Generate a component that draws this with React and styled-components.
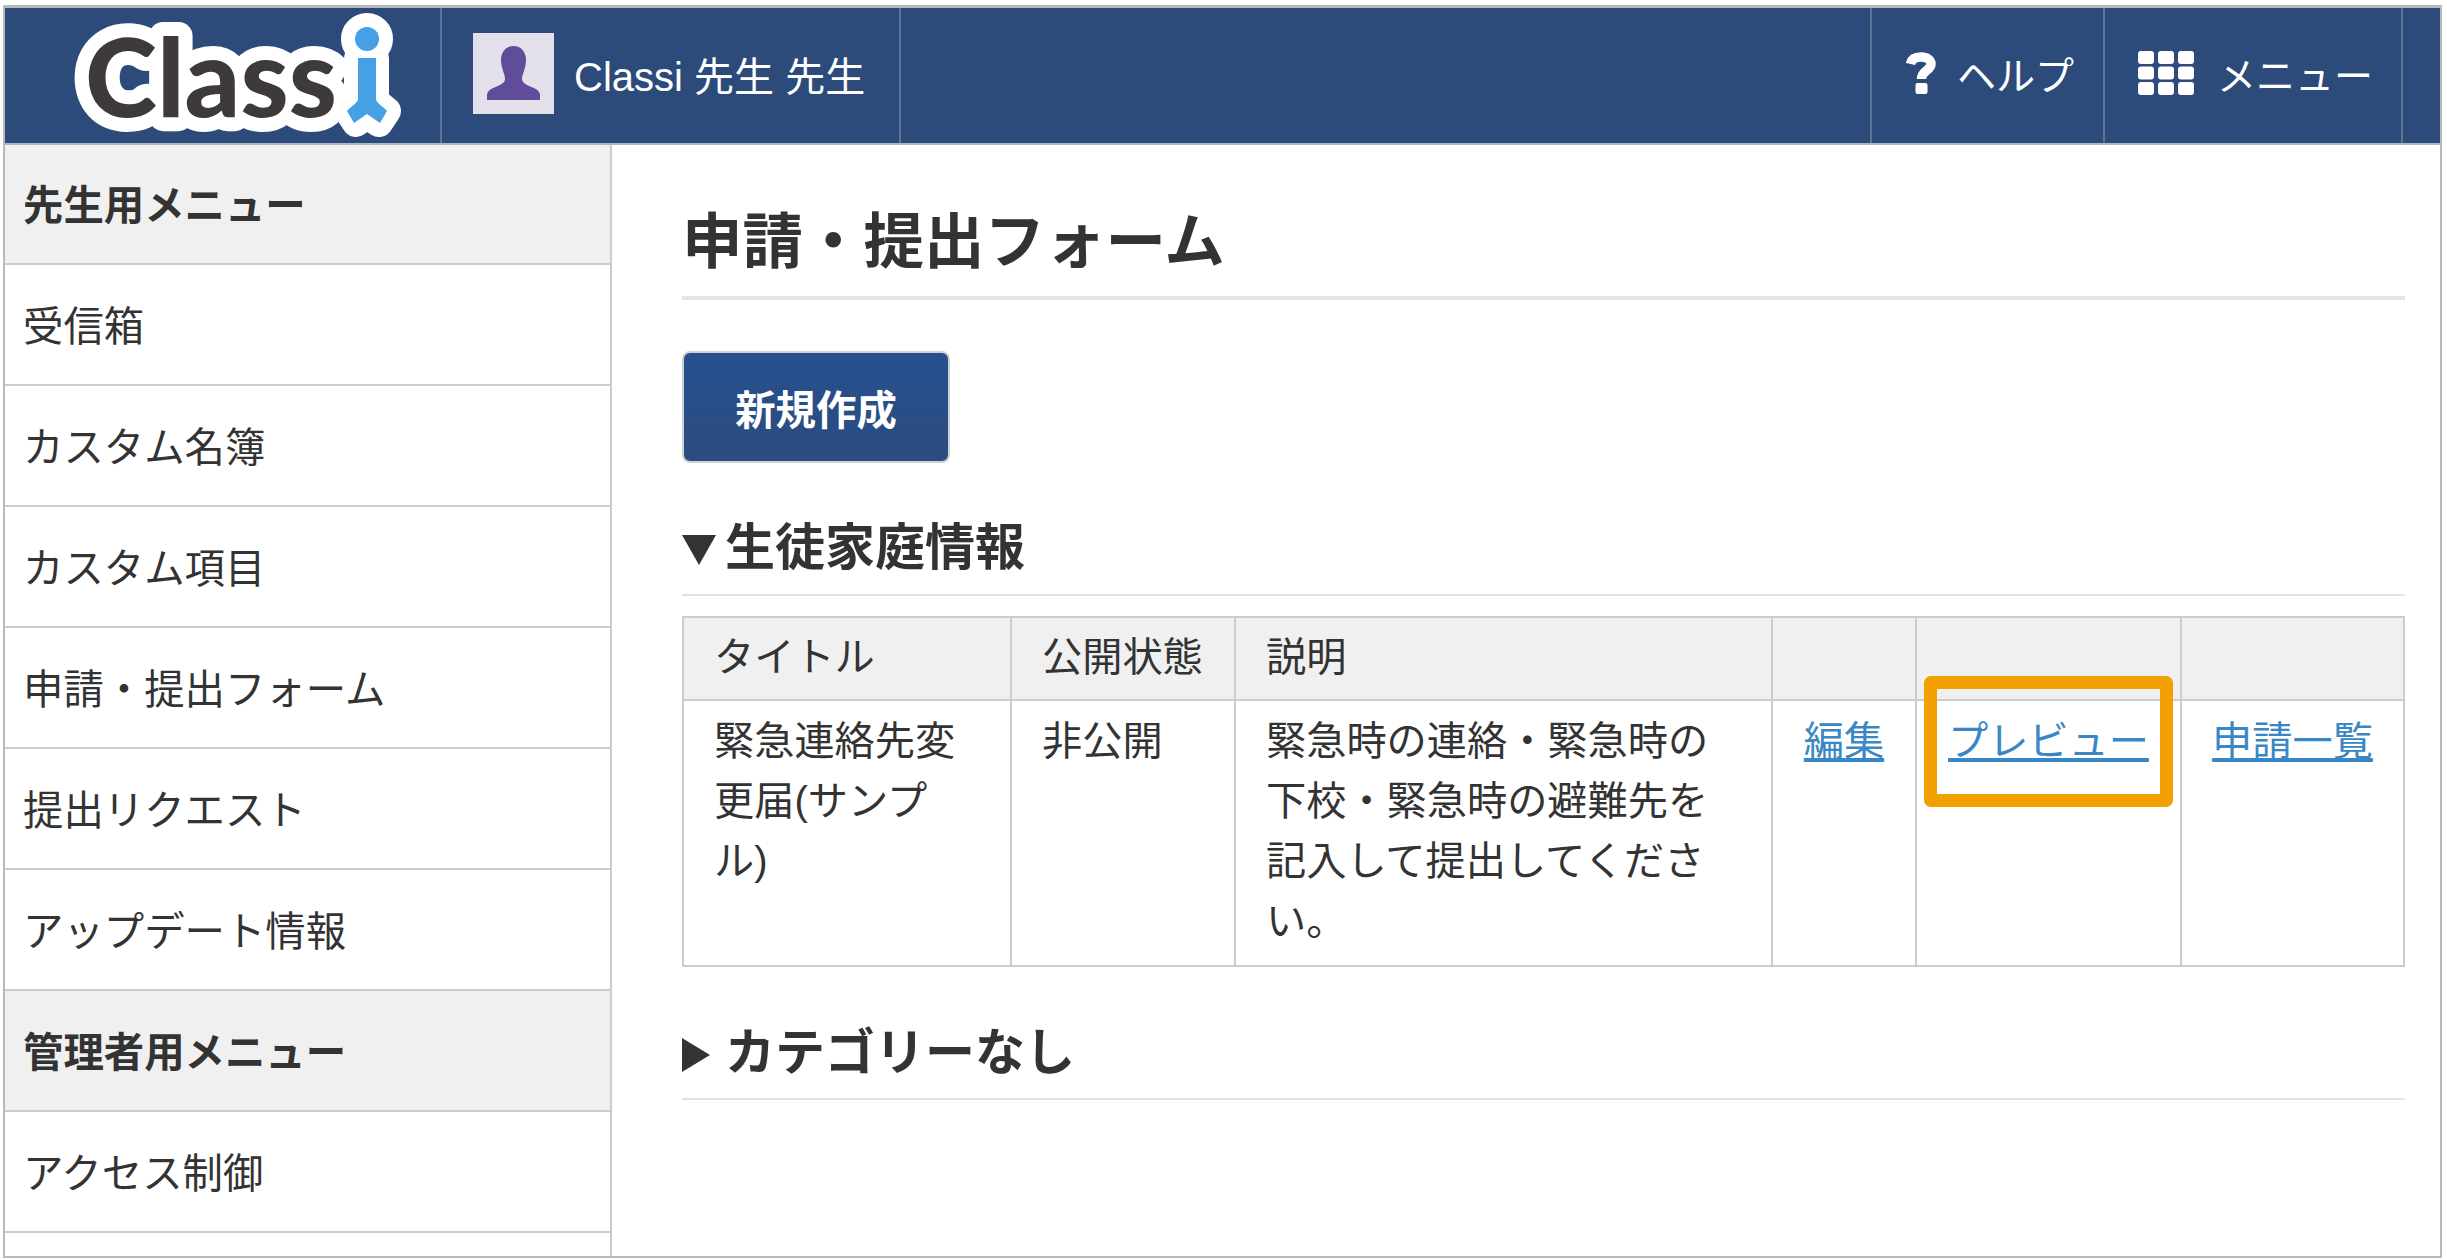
import React from "react";
import styled, { createGlobalStyle } from "styled-components";

const Global = createGlobalStyle`
  html, body { margin: 0; padding: 0; background: #fff; }
  * { box-sizing: border-box; }
  body { font-family: "Liberation Sans", "Noto Sans CJK JP", sans-serif; color: #333; }
`;

const Frame = styled.div`
  margin: 5px 0 0 3px;
  width: 2439px;
  height: 1253px;
  border: solid #b9b9b9;
  border-width: 3px 2px 2px 2px;
  display: flex;
  flex-direction: column;
  overflow: hidden;
`;

const Header = styled.header`
  height: 137px;
  flex: none;
  display: flex;
  background: #2c4b7a;
  border-bottom: 2px solid #a9b9cd;
  color: #fff;
`;

const HeaderCell = styled.div`
  display: flex;
  align-items: center;
  flex: none;
  width: ${(p) => p.$width}px;
  padding-left: ${(p) => p.$pad || 0}px;
  gap: ${(p) => p.$gap || 0}px;
  border-right: 2px solid #5f7593;
  font-size: ${(p) => p.$size || 40}px;
`;

const HeaderSpacer = styled.div`
  flex: 1;
  border-right: 2px solid #5f7593;
`;

const HeaderEnd = styled.div`
  width: 37px;
  flex: none;
`;

const Avatar = styled.svg`
  width: 81px;
  height: 81px;
  flex: none;
  display: block;
  margin-top: -4px;
`;

const UserName = styled.span`
  white-space: nowrap;
  margin-top: -4px;
`;

const HeadIcon = styled.svg`
  flex: none;
  display: block;
  margin-top: -6px;
`;

const HeadLabel = styled.span`
  white-space: nowrap;
  margin-top: -6px;
`;

const LogoArt = styled.svg`
  display: block;
  flex: none;
`;

const Body = styled.div`
  flex: 1;
  display: flex;
  min-height: 0;
`;

const Sidebar = styled.nav`
  width: 607px;
  flex: none;
  border-right: 2px solid #ccc;
  overflow: hidden;
`;

const MenuRow = styled.div`
  height: ${(p) => p.$height || 121}px;
  display: flex;
  align-items: center;
  padding: 0 0 3px 18px;
  font-size: 40.4px;
  font-weight: ${(p) => (p.$head ? 700 : 400)};
  background: ${(p) => (p.$head ? "#f0f0f0" : "#fff")};
  border-bottom: 2px solid #ccc;
`;

const Main = styled.main`
  flex: 1;
  padding: 61px 35px 0 70px;
`;

const Title = styled.h1`
  margin: 0;
  font-size: 60.5px;
  line-height: 72px;
  font-weight: 700;
  padding-bottom: 18px;
  border-bottom: 4px solid #e4e4e4;
`;

const PrimaryButton = styled.button`
  display: block;
  margin-top: 51px;
  width: 268px;
  height: 112px;
  border: 2px solid #cfd3d8;
  border-radius: 8px;
  background: linear-gradient(#26508f, #2b4c7e);
  color: #fff;
  font: 700 40.4px "Liberation Sans", "Noto Sans CJK JP", sans-serif;
`;

const SectionHead = styled.h2`
  margin: ${(p) => p.$top}px 0 0;
  display: flex;
  align-items: center;
  font-size: 50px;
  line-height: 60px;
  font-weight: 700;
  padding-bottom: ${(p) => p.$bottom}px;
  border-bottom: 2px solid #e2e2e2;
`;

const Caret = styled.svg`
  flex: none;
  display: block;
  width: 34px;
  height: 34px;
  margin-right: 9px;
  margin-top: 4px;
`;

const Table = styled.table`
  margin-top: 20px;
  width: 1721px;
  table-layout: fixed;
  border-collapse: collapse;
  font-size: 40.2px;
  line-height: 60px;
`;

const Th = styled.th`
  background: #f0f0f0;
  border: 2px solid #ccc;
  font-weight: 400;
  text-align: left;
  padding: 9px 30px 10px;
  height: 83px;
  white-space: nowrap;
`;

const Td = styled.td`
  position: relative;
  border: 2px solid #ccc;
  vertical-align: top;
  padding: 11px 30px 13px;
  text-align: ${(p) => (p.$center ? "center" : "left")};
`;

const TableLink = styled.a`
  color: #3a87c6;
  text-decoration: underline;
  white-space: nowrap;
`;

const Highlight = styled.div`
  position: absolute;
  left: 7px;
  right: 7px;
  top: -25px;
  height: 131px;
  border: 13px solid #f29f00;
  border-radius: 7px;
  pointer-events: none;
`;

const Logo = () => (
  <LogoArt width="335" height="134" viewBox="70 8 335 134">
    <g stroke="#fff" strokeWidth="28" strokeLinejoin="round" strokeLinecap="round" fill="#fff">
      <text x="85" y="116" fontFamily="Lato, sans-serif" fontWeight="900" fontSize="108" textLength="252" lengthAdjust="spacingAndGlyphs">Class</text>
      <circle cx="367" cy="38" r="12" />
      <path d="M358 58H375V100L387 110L379 122L367 114L356 122L348 110L358 100Z" />
    </g>
    <text x="85" y="116" fill="#3e3a39" fontFamily="Lato, sans-serif" fontWeight="900" fontSize="108" textLength="252" lengthAdjust="spacingAndGlyphs">Class</text>
    <circle cx="367" cy="38" r="12" fill="#46a0e6" />
    <path d="M358 57H376V98C376 102 384 106 387 110L380 122L367 113L354 122L347 110C350 106 358 102 358 98Z" fill="#46a0e6" />
  </LogoArt>
);

const MENU = [
  ["先生用メニュー", true], ["受信箱"], ["カスタム名簿"], ["カスタム項目"], ["申請・提出フォーム"],
  ["提出リクエスト"], ["アップデート情報"], ["管理者用メニュー", true], ["アクセス制御"],
];

export default function App() {
  return (
    <>
      <Global />
      <Frame>
        <Header>
          <HeaderCell $width={437} $pad={65}><Logo /></HeaderCell>
          <HeaderCell $width={459} $pad={31} $gap={20}>
            <Avatar viewBox="0 0 81 81">
              <rect width="81" height="81" fill="#e3e0ec" />
              <path d="M40.5 13C48 13 53 19 53 27C53 35 49 41 49 46C49 50 54 52 61 55C65 57 67 59 67 62V67H14V62C14 59 16 57 20 55C27 52 32 50 32 46C32 41 28 35 28 27C28 19 33 13 40.5 13Z" fill="#604c99" />
            </Avatar>
            <UserName>Classi 先生 先生</UserName>
          </HeaderCell>
          <HeaderSpacer />
          <HeaderCell $width={233} $pad={34} $gap={21} $size={39}>
            <HeadIcon width="30" height="42" viewBox="0 0 30 42">
              <path d="M4.5 12C5.5 7 9.5 5 15 5C21 5 25 8 25 12C25 18.5 15.5 18.5 15.5 27" fill="none" stroke="#fff" strokeWidth="9.5" />
              <rect x="9.5" y="31" width="12" height="11" rx="2" fill="#fff" />
            </HeadIcon>
            <HeadLabel>ヘルプ</HeadLabel>
          </HeaderCell>
          <HeaderCell $width={298} $pad={33} $gap={23} $size={39}>
            <HeadIcon width="56" height="44" viewBox="0 0 56 44">
              {[0, 1, 2].flatMap((r) => [0, 1, 2].map((c) => (
                <rect key={`${r}${c}`} x={c * 20} y={r * 15.5} width="16" height="13" rx="3" fill="#fff" />
              )))}
            </HeadIcon>
            <HeadLabel>メニュー</HeadLabel>
          </HeaderCell>
          <HeaderEnd />
        </Header>
        <Body>
          <Sidebar>
            {MENU.map(([label, head], i) => (
              <MenuRow key={label} $head={head} $height={i === 0 ? 120 : 121}>{label}</MenuRow>
            ))}
          </Sidebar>
          <Main>
            <Title>申請・提出フォーム</Title>
            <PrimaryButton>新規作成</PrimaryButton>
            <SectionHead $top={55} $bottom={16}>
              <Caret viewBox="0 0 34 34"><path d="M0 2H34L17 32Z" fill="#333" /></Caret>
              生徒家庭情報
            </SectionHead>
            <Table>
              <colgroup>
                <col style={{ width: 328 }} />
                <col style={{ width: 224 }} />
                <col style={{ width: 537 }} />
                <col style={{ width: 144 }} />
                <col style={{ width: 265 }} />
                <col style={{ width: 223 }} />
              </colgroup>
              <thead>
                <tr>
                  <Th>タイトル</Th>
                  <Th>公開状態</Th>
                  <Th>説明</Th>
                  <Th />
                  <Th />
                  <Th />
                </tr>
              </thead>
              <tbody>
                <tr>
                  <Td>緊急連絡先変更届(サンプル)</Td>
                  <Td>非公開</Td>
                  <Td>緊急時の連絡・緊急時の下校・緊急時の避難先を記入して提出してください。</Td>
                  <Td $center><TableLink>編集</TableLink></Td>
                  <Td $center><TableLink>プレビュー</TableLink><Highlight /></Td>
                  <Td $center><TableLink>申請一覧</TableLink></Td>
                </tr>
              </tbody>
            </Table>
            <SectionHead $top={56} $bottom={15}>
              <Caret viewBox="0 0 34 34"><path d="M0 0L28 17L0 34Z" fill="#333" /></Caret>
              カテゴリーなし
            </SectionHead>
          </Main>
        </Body>
      </Frame>
    </>
  );
}
